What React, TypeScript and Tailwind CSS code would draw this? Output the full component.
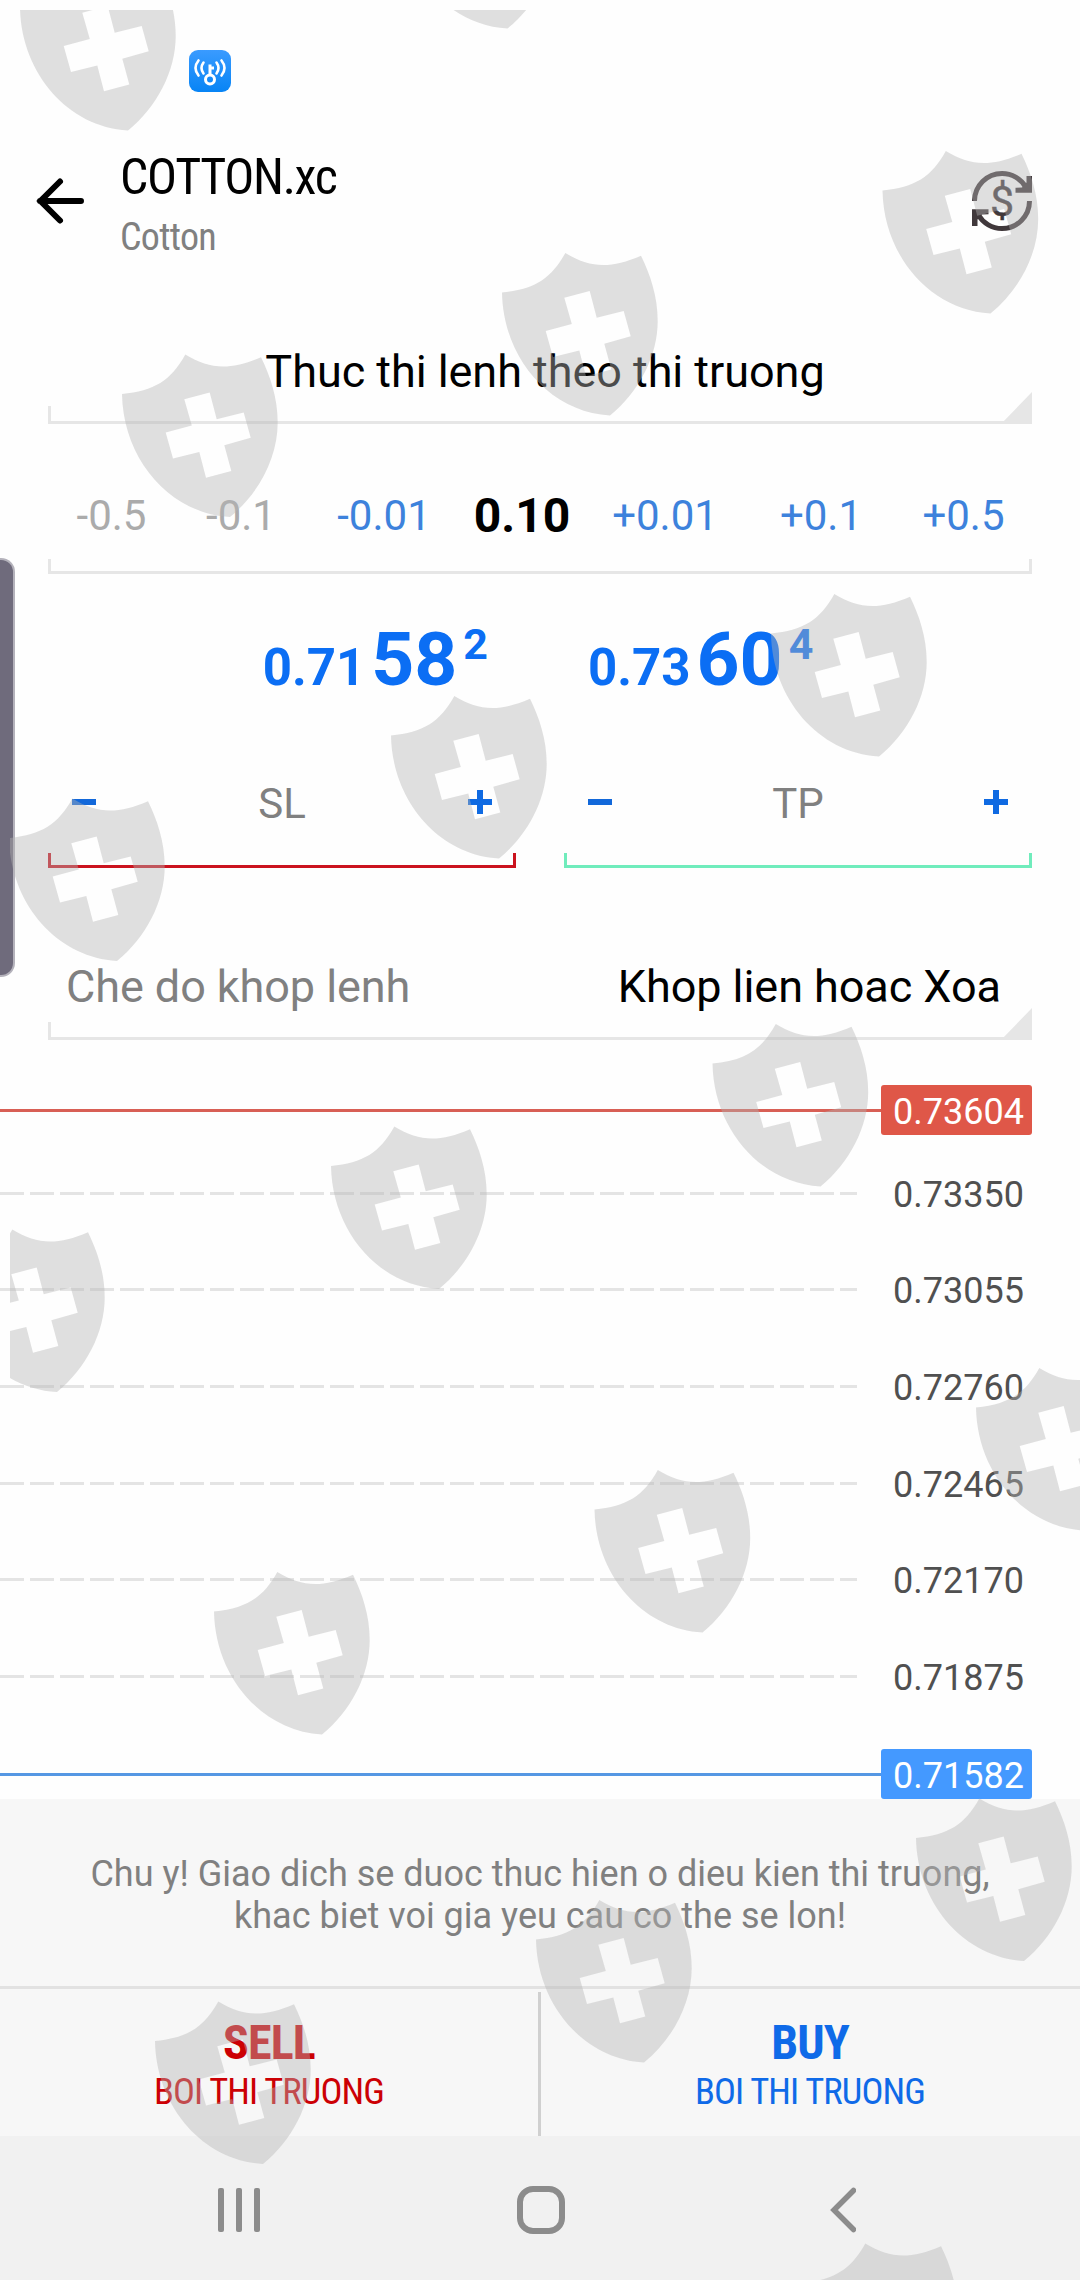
import React from 'react';
import clsx from 'clsx';

const steps = [
  { label: '-0.5', className: 'w-[127px] text-[#ababab]' },
  { label: '-0.1', className: 'w-[132px] text-[#ababab]' },
  { label: '-0.01', className: 'w-[154px] text-[#3d82dc]' },
  { label: '0.10', className: 'w-[122px] text-[48px] font-bold text-black' },
  { label: '+0.01', className: 'w-[164px] text-[#3d82dc]' },
  { label: '+0.1', className: 'w-[148px] text-[#3d82dc]' },
  { label: '+0.5', className: 'w-[137px] text-[#3d82dc]' },
];

const levels = ['0.73350', '0.73055', '0.72760', '0.72465', '0.72170', '0.71875'];

// top-left corner of every shield of the overlay
const shields = [
  [20, -32], [399.5, -134], [882.5, 151], [502, 253], [122, 354.5], [771, 594],
  [391, 696], [9, 798.5], [712.5, 1024], [331, 1126.5], [-51, 1229.5], [976, 1368],
  [594.5, 1470], [214, 1572], [916, 1798.5], [536, 1900], [155, 2001.5], [802, 2243.5],
];

const ShieldOverlay = () => (
  <svg
    className="pointer-events-none absolute top-[10px] left-[10px] z-20"
    width="1070"
    height="2270"
    viewBox="10 10 1070 2270"
  >
    {shields.map(([x, y]) => (
      <path
        key={`${x}-${y}`}
        transform={`translate(${x} ${y})`}
        fill="#b4b4b4"
        fillOpacity="0.415"
        fillRule="evenodd"
        d="M0 39.5C32 36.5 49 26 63.3 0C88 15 108 16 139 2.7C148 21 155.7 43 155.7 68C155.7 103 137 139 108 162.5C47 159 1 104 0 39.5ZM62.3 44.7L87.7 38L94.7 64.7L121.7 58L128.7 83.3L102.3 90.7L109.3 116.5L84 123.3L77.3 97.5L51 104L43.7 78L69.8 71Z"
      />
    ))}
  </svg>
);

const WifiKeyIcon = () => (
  <svg width="42" height="42" viewBox="0 0 42 42" fill="none" stroke="#fff" strokeLinecap="round">
    <defs>
      <linearGradient id="wifi-bg" x1="0" y1="0" x2="0" y2="1">
        <stop offset="0" stopColor="#3a9bff" />
        <stop offset="1" stopColor="#0784f5" />
      </linearGradient>
    </defs>
    <rect width="42" height="42" rx="9" fill="url(#wifi-bg)" stroke="none" />
    <circle cx="21" cy="29.5" r="4.5" strokeWidth="3" />
    <path d="M21 25V14.5M21 18H25" strokeWidth="3" strokeLinecap="butt" />
    <path d="M14.5 12.5Q10.5 18 14.5 23.5M27.5 12.5Q31.5 18 27.5 23.5" strokeWidth="2.6" />
    <path d="M9.5 10.5Q3.5 18 9.5 25.5M32.5 10.5Q38.5 18 32.5 25.5" strokeWidth="2.6" />
  </svg>
);

const BackIcon = () => (
  <svg width="50" height="50" viewBox="0 0 50 50" fill="none" stroke="#000" strokeWidth="6" strokeLinecap="round">
    <path d="M5 25H46M25 5.5L5.5 25L25 44.5" />
  </svg>
);

const DollarSyncIcon = () => (
  <svg width="60" height="60" viewBox="0 0 60 60" fill="none" stroke="#40383b" strokeWidth="5">
    <path d="M2.5 30A27.5 27.5 0 0 1 30 2.5A27.5 27.5 0 0 1 53.8 16.2" />
    <path d="M57.5 30A27.5 27.5 0 0 1 30 57.5A27.5 27.5 0 0 1 6.2 43.8" />
    <path d="M60 5V21.7H43.5V16.8L50 16.5L54.5 11.5V5ZM0 55V38.3H16.5V43.2L10 43.5L5.5 48.5V55Z" fill="#40383b" stroke="none" />
    <text x="30" y="45" textAnchor="middle" fontSize="43" fill="#40383b" stroke="#40383b" strokeWidth="0.4" className="font-['Roboto']">
      $
    </text>
  </svg>
);

const Bracket = ({ className }: { className?: string }) => (
  <div className={clsx('h-[15px] border-x-3 border-b-3', className)} />
);

const SelectBracket = () => (
  <div className="relative h-[18px] border-b-3 border-l-3 border-[#e6e6e6]">
    <svg className="absolute right-0 -bottom-[3px]" width="31" height="32" viewBox="0 0 31 32">
      <path d="M31 0V32H0Z" fill="#e6e6e6" />
    </svg>
  </div>
);

const Price = ({ head, big, sup }: { head: string; big: string; sup: string }) => (
  <div className="flex h-[90px] items-baseline font-bold text-[#0b6ef4]">
    <span className="text-[51px] leading-[90px]">{head}</span>
    <span className="ml-[6px] text-[75px] leading-[90px]">{big}</span>
    <span className="mt-[8px] ml-[6px] self-start text-[43px] leading-[44px]">{sup}</span>
  </div>
);

const StopField = ({ label, className }: { label: string; className: string }) => (
  <div className="w-[468px]">
    <div className="flex h-[60px] items-center justify-between px-[24px]">
      <div className="h-[6px] w-[24px] bg-[#1268da]" />
      <span className="pt-[3px] text-[42px] leading-none text-[#808080]">{label}</span>
      <svg width="24" height="24" viewBox="0 0 24 24" stroke="#0f6ae2" strokeWidth="6">
        <path d="M0 12H24M12 0V24" />
      </svg>
    </div>
    <Bracket className={clsx('mt-[21px]', className)} />
  </div>
);

const MarkedPrice = ({ value, line, box }: { value: string; line: string; box: string }) => (
  <div className="flex h-[50px] items-center">
    <div className={clsx('h-[3px] w-[881px]', line)} />
    <div className={clsx('h-[50px] w-[151px] rounded-[3px] pt-[2px] pl-[12px] text-[36px] leading-[50px] text-white', box)}>
      {value}
    </div>
  </div>
);

const TradeButton = ({ title, className }: { title: string; className: string }) => (
  <button className={clsx('flex w-[538px] flex-col items-center pt-[26px]', className)}>
    <span className="text-[48px] leading-[56px] font-bold tracking-[-0.9px] [font-stretch:75%]">{title}</span>
    <span className="mt-[-1px] text-[36.5px] leading-[44px] tracking-[-0.85px] [font-stretch:75%]">BOI THI TRUONG</span>
  </button>
);

export default function App() {
  return (
    <div className="relative flex h-[2280px] w-[1080px] flex-col overflow-hidden bg-[#fefefe] font-['Roboto',sans-serif]">
      <ShieldOverlay />

      {/* Edge panel handle */}
      <div className="absolute top-[558px] left-0 z-10 h-[419px] w-[15px] rounded-r-[14px] border-y-2 border-r-2 border-[#b4b2bb] bg-[#6f6b7c]" />

      <div className="h-[147px] pt-[50px] pl-[189px]">
        <WifiKeyIcon />
      </div>

      <header className="flex h-[192px] pr-[48px] pl-[35px]">
        <div className="pt-[29px]">
          <BackIcon />
        </div>
        <div className="ml-[35px] flex-1">
          <div className="text-[50px] leading-[60px] tracking-[-1.3px] text-black [font-stretch:75%]">COTTON.xc</div>
          <div className="mt-[6px] text-[38px] leading-[48px] tracking-[-0.7px] text-[#808080] [font-stretch:75%]">Cotton</div>
        </div>
        <div className="pt-[24px]">
          <DollarSyncIcon />
        </div>
      </header>

      <main className="px-[48px]">
        <div className="h-[67px] pl-[10px] text-center text-[45px] leading-[65px] tracking-[-0.05px] text-black">
          Thuc thi lenh theo thi truong
        </div>
        <SelectBracket />

        <div className="mt-[62px] flex h-[60px] text-center text-[42px] leading-[60px]">
          {steps.map((step) => (
            <div key={step.label} className={step.className}>
              {step.label}
            </div>
          ))}
        </div>
        <Bracket className="mt-[13px] border-[#e6e6e6]" />

        <div className="mt-[40px] flex justify-center gap-[100px] pr-[4px]">
          <Price head="0.71" big="58" sup="2" />
          <Price head="0.73" big="60" sup="4" />
        </div>

        <div className="mt-[68px] flex justify-between">
          <StopField label="SL" className="border-[#cb131e]" />
          <StopField label="TP" className="border-[#70ecbc]" />
        </div>

        <div className="mt-[89px] flex h-[65px] justify-between pr-[31px] pl-[18px] text-[45px] leading-[60px] tracking-[-0.07px]">
          <span className="text-[#808080]">Che do khop lenh</span>
          <span className="text-black">Khop lien hoac Xoa</span>
        </div>
        <SelectBracket />
      </main>

      {/* Tick chart */}
      <section className="flex h-[759px] flex-col pt-[45px]">
        <MarkedPrice value="0.73604" line="bg-[#d85f55]" box="bg-[#df5748]" />
        <div className="mt-[10px]">
          {levels.map((level) => (
            <div key={level} className="flex h-[96.6px] items-center">
              <div className="h-[3px] w-[857px] bg-[repeating-linear-gradient(90deg,#e4e4e4_0_24px,transparent_24px_30px)]" />
              <span className="ml-[36px] pt-[3px] text-[36px] leading-none text-[#505050]">{level}</span>
            </div>
          ))}
        </div>
        <div className="mt-auto">
          <MarkedPrice value="0.71582" line="bg-[#5597e3]" box="bg-[#4499ff]" />
        </div>
      </section>

      <section className="h-[187px] bg-[#f7f7f7] pt-[54px] text-center text-[36px] leading-[42px] text-[#808080]">
        <p>Chu y! Giao dich se duoc thuc hien o dieu kien thi truong,</p>
        <p>khac biet voi gia yeu cau co the se lon!</p>
      </section>

      <section className="flex h-[150px] border-t-3 border-[#e2e2e2] bg-[#f7f7f7]">
        <TradeButton title="SELL" className="text-[#cc0004]" />
        <div className="mt-[3px] w-[3px] bg-[#d0d0d0]" />
        <TradeButton title="BUY" className="text-[#0f6ae8]" />
      </section>

      <nav className="flex h-[144px] items-start justify-between bg-[#f1f1f1] pt-[50px] pr-[224px] pl-[218px]">
        <div className="flex gap-[12px] pt-[2px]">
          <div className="h-[44px] w-[6px] rounded-[2px] bg-[#8c8c8c]" />
          <div className="h-[44px] w-[6px] rounded-[2px] bg-[#8c8c8c]" />
          <div className="h-[44px] w-[6px] rounded-[2px] bg-[#8c8c8c]" />
        </div>
        <div className="mr-[8px] h-[48px] w-[48px] rounded-[16px] border-6 border-[#8c8c8c]" />
        <svg width="26" height="48" viewBox="0 0 26 48" fill="none" stroke="#8c8c8c" strokeWidth="5.5" strokeLinecap="round">
          <path d="M23.5 4.5L4 24L23.5 43.5" />
        </svg>
      </nav>
    </div>
  );
}
